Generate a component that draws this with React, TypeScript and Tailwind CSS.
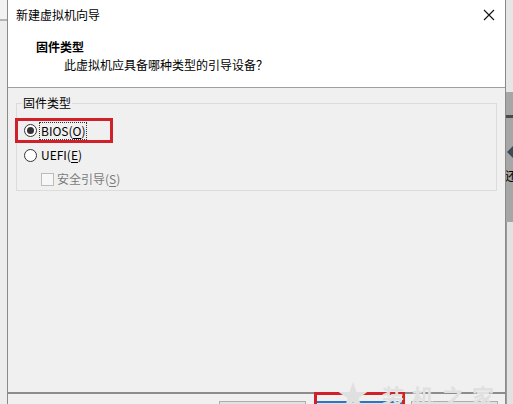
import React from 'react';

const font = { fontFamily: "'Noto Sans CJK SC', 'Noto Sans', sans-serif" };

function Radio({ checked }: { checked?: boolean }) {
  return (
    <span className="w-[13px] h-[13px] rounded-full border border-[#333333] bg-white flex items-center justify-center shrink-0">
      {checked && <span className="w-[7px] h-[7px] rounded-full bg-[#333333]" />}
    </span>
  );
}

export default function App() {
  return (
    <div
      className="w-[513px] h-[404px] overflow-hidden flex bg-[#f0f0f0] text-[12px] text-black relative"
      style={font}
    >
      {/* window behind, left edge */}
      <div className="w-[7px] flex flex-col bg-[#ededed]">
        <div className="h-[19px] bg-[#f2f2f2]" />
        <div className="h-[2px] bg-[#b4b4b4]" />
      </div>

      {/* dialog */}
      <div className="w-[499px] h-[404px] flex flex-col border-l border-r border-[#8a8a8a]">
        <div className="bg-white shrink-0">
          {/* title bar */}
          <div className="h-[30px] flex items-center justify-between pl-[8px] pr-[9px]">
            <span className="leading-[16px]">新建虚拟机向导</span>
            <svg width="12" height="12" viewBox="0 0 12 12" className="mr-[1px]">
              <path d="M1 1 L11 11 M11 1 L1 11" stroke="#111" strokeWidth="1.1" />
            </svg>
          </div>
          {/* header */}
          <div className="h-[58px] pl-[28px] pt-[9px] flex flex-col gap-[2px] border-b border-[#a0a0a0]">
            <span className="font-bold leading-[16px]">固件类型</span>
            <span className="pl-[28px] leading-[16px]">此虚拟机应具备哪种类型的引导设备？</span>
          </div>
        </div>

        {/* body */}
        <div className="h-[304px] shrink-0 pt-[15px] px-[8px]">
          <div className="w-[481px] h-[88px] border border-[#dcdcdc] flex flex-col">
            <span className="-mt-[9px] ml-[5px] px-[1px] w-fit bg-[#f0f0f0] leading-[16px]">固件类型</span>
            <div className="mt-[7px] -ml-[2px] w-[98px] h-[25px] border-[3px] border-[#d0202a] flex items-center pl-[6px] gap-[1px]">
              <Radio checked />
              <span className="ml-[1px] px-[1px] leading-[16px] border border-dotted border-[#333]">
                BIOS(<span className="underline underline-offset-2">O</span>)
              </span>
            </div>
            <div className="mt-[4px] h-[16px] pl-[7px] flex items-center gap-[4px]">
              <Radio />
              <span className="leading-[16px]">
                UEFI(<span className="underline underline-offset-2">E</span>)
              </span>
            </div>
            <div className="mt-[8px] h-[16px] pl-[24px] flex items-center gap-[3px]">
              <span className="w-[13px] h-[13px] border border-[#bcbcbc] bg-[#f7f7f7] shrink-0" />
              <span className="leading-[16px] text-[#7a7a7a]">
                安全引导(<span className="underline underline-offset-2">S</span>)
              </span>
            </div>
          </div>
        </div>

        {/* footer */}
        <div className="border-t-2 border-[#8c8c8c] flex-1 min-h-0 overflow-hidden pt-[7px] pr-[7px] flex justify-end items-start gap-[9px] bg-[#f0f0f0]">
          <div className="w-[87px] h-[23px] shrink-0 border border-[#adadad] bg-[#e1e1e1]" />
          <div className="w-[87px] h-[23px] shrink-0 border-2 border-[#2f74c4] bg-[#e1e1e1]" />
          <div className="w-[87px] h-[23px] shrink-0 border border-[#adadad] bg-[#e1e1e1]" />
        </div>
      </div>

      {/* window behind, right edge */}
      <div className="w-[7px] flex flex-col bg-[#e4e4e4] overflow-hidden">
        <div className="h-[92px] bg-[#e6e6e6]" />
        <div className="h-[130px] bg-[#a6a6a6] flex flex-col">
          <div className="mt-[23px] h-[3px] bg-[#4a4a4a]" />
          <div className="mt-[28px] ml-[1px] w-0 h-0 border-y-[6px] border-y-transparent border-r-[6px] border-r-[#3c4a56]" />
          <span className="mt-[10px] -ml-[1px] leading-[16px] text-black">还</span>
        </div>
        <div className="flex-1 bg-[#e2e2e2] border-l border-[#9a9a9a]" />
      </div>

      {/* annotation over the next button */}
      <div className="absolute left-[314px] top-[392px] w-[91px] h-[20px] border-[3px] border-[#d0202a]" />
      {/* watermark */}
      <div className="absolute left-[338px] top-[378px] flex items-end gap-[14px] text-[#e0e0e0] pointer-events-none">
        <span className="text-[30px] leading-[30px]">★</span>
        <span className="text-[22px] leading-[26px] font-bold tracking-[8px]">装机之家</span>
      </div>
    </div>
  );
}
